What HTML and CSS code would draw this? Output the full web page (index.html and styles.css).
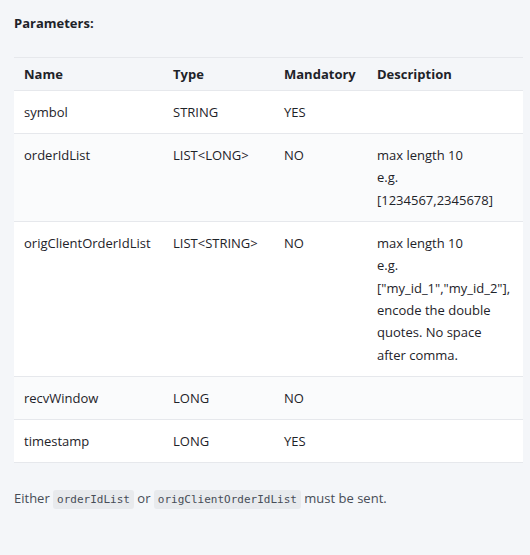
FILE: index.html
```html
<!DOCTYPE html>
<html>
<head>
<meta charset="utf-8">
<link rel="stylesheet" href="styles.css">
</head>
<body>
<div class="page">
  <p class="title">Parameters:</p>
  <table class="params">
    <thead>
      <tr><th class="c-name">Name</th><th class="c-type">Type</th><th class="c-mand">Mandatory</th><th class="c-desc">Description</th></tr>
    </thead>
    <tbody>
      <tr><td>symbol</td><td>STRING</td><td>YES</td><td class="desc"></td></tr>
      <tr class="alt"><td>orderIdList</td><td>LIST&lt;LONG&gt;</td><td>NO</td><td class="desc">max length 10<br>e.g. [1234567,2345678]</td></tr>
      <tr><td>origClientOrderIdList</td><td>LIST&lt;STRING&gt;</td><td>NO</td><td class="desc">max length 10<br>e.g. ["my_id_1","my_id_2"], encode the double quotes. No space after comma.</td></tr>
      <tr class="alt"><td>recvWindow</td><td>LONG</td><td>NO</td><td class="desc"></td></tr>
      <tr><td>timestamp</td><td>LONG</td><td>YES</td><td class="desc"></td></tr>
    </tbody>
  </table>
  <p class="note">Either <code>orderIdList</code> or <code>origClientOrderIdList</code> must be sent.</p>
</div>
</body>
</html>
```
FILE: styles.css
```css
html, body {
  margin: 0;
  padding: 0;
  background: #f4f6f9;
}
body {
  font-family: "Open Sans", "Noto Sans", sans-serif;
  font-size: 13px;
  color: #1e2329;
}
.page {
  padding: 0 8px 0 14px;
}
.title {
  margin: 0;
  padding-top: 13px;
  font-weight: 700;
  font-size: 13px;
  line-height: 20px;
}
.params {
  margin-top: 24px;
  width: 509px;
  border-collapse: collapse;
  table-layout: fixed;
}
.params th, .params td {
  text-align: left;
  vertical-align: top;
  padding: 10px 10px;
  line-height: 22px;
  border-top: 1px solid #e6e8ec;
}
.params td.desc { line-height: 22.33px; }
.params th {
  font-weight: 700;
  padding: 5px 10px;
}
.params tbody tr { background: #ffffff; }
.params tbody tr.alt { background: #fafbfc; }
.params tbody tr:last-child td { border-bottom: 1px solid #e6e8ec; }
.c-name { width: 129px; }
.c-type { width: 91px; }
.c-mand { width: 73px; }
.note {
  margin: 24px 0 0;
  line-height: 22px;
  color: #474d57;
}
code {
  font-family: "DejaVu Sans Mono", "Liberation Mono", monospace;
  font-size: 11px;
  background: #e8eaed;
  color: #474d57;
  padding: 3px 4px;
  border-radius: 3px;
}
```
